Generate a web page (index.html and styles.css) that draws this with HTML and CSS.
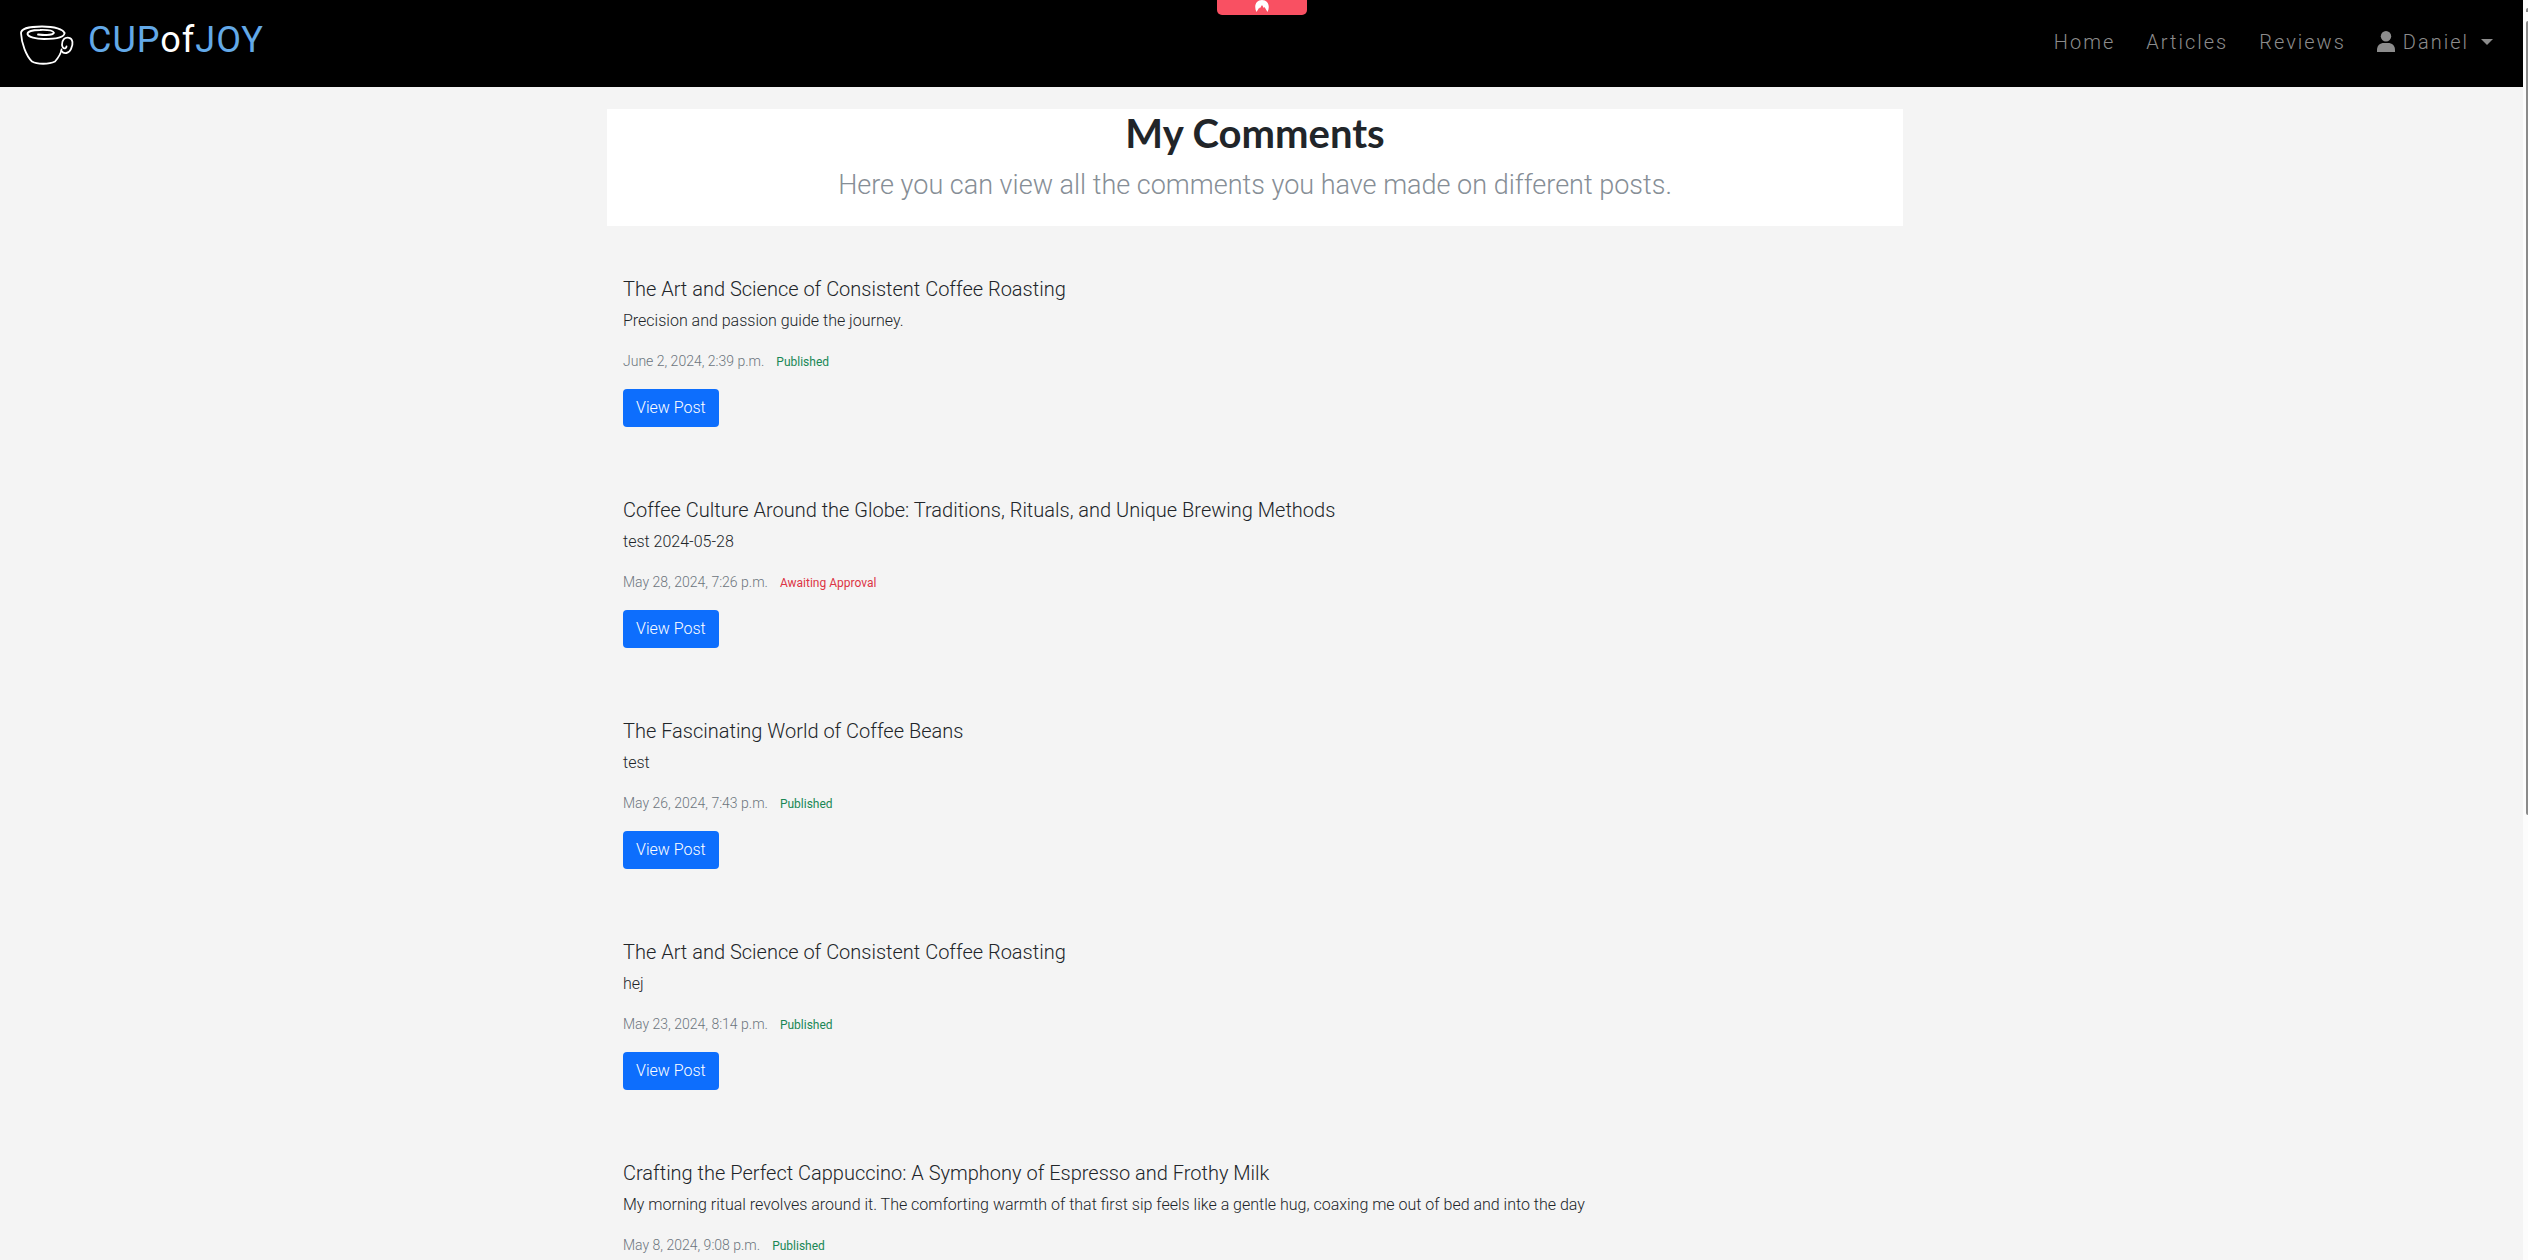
FILE: index.html
```html
<!DOCTYPE html>
<html lang="en">
<head>
<meta charset="utf-8">
<title>My Comments</title>
<link rel="stylesheet" href="styles.css">
</head>
<body>
<div class="page">
  <header class="navbar">
    <a class="brand" href="#">
      <svg class="brand-cup" width="54" height="42" viewBox="0 0 54 42" fill="none" stroke="#fff" stroke-width="1.8" stroke-linecap="round" stroke-linejoin="round" aria-hidden="true">
        <path d="M44.500 8C43 4.500 35 1.500 22 1.500C11 1.500 1 3.500 1 8C1.500 18 6 31 12 36.500C17 39.500 29 39.500 35 36.500C38 33 41 29 41.500 24.500"/>
        <path d="M18 9.500C27 10.500 33.500 9.500 34 7.800C33 5.500 26 4.800 20 5C12 5 7.500 6.500 7.500 9C8 12 16 14 24 14C35 14 44.500 12.500 44.500 8"/>
        <path d="M41.500 26C44 29.500 49 28.500 51 24C53.500 19 53 13.500 49 12.800C44.500 12 42 15 42 20C42.500 24 46 24.500 46.500 21.500"/>
      </svg>
      <span class="brand-name">CUP<span class="brand-of">of</span>JOY</span>
    </a>
    <nav class="menu">
      <a href="#">Home</a>
      <a href="#">Articles</a>
      <a href="#">Reviews</a>
      <button class="user" type="button">
        <svg width="18" height="21" viewBox="0 0 18 21" fill="currentColor" aria-hidden="true"><circle cx="9" cy="5.200" r="5.200"/><path d="M0 21v-2c0-4.500 3-7 7-7h4c4 0 7 2.500 7 7v2z"/></svg>
        <span>Daniel</span>
        <svg class="caret" width="12" height="6" viewBox="0 0 12 6" fill="currentColor" aria-hidden="true"><path d="M0 0h12L6 6z"/></svg>
      </button>
    </nav>
  </header>

  <main class="content">
    <section class="intro">
      <h1>My Comments</h1>
      <p>Here you can view all the comments you have made on different posts.</p>
    </section>
    <div class="comments">
      <article class="comment">
        <h2>The Art and Science of Consistent Coffee Roasting</h2>
        <p class="text">Precision and passion guide the journey.</p>
        <p class="meta"><time>June 2, 2024, 2:39 p.m.</time><span class="badge published">Published</span></p>
        <a class="btn" href="#">View Post</a>
      </article>
      <article class="comment">
        <h2>Coffee Culture Around the Globe: Traditions, Rituals, and Unique Brewing Methods</h2>
        <p class="text">test 2024-05-28</p>
        <p class="meta"><time>May 28, 2024, 7:26 p.m.</time><span class="badge awaiting">Awaiting Approval</span></p>
        <a class="btn" href="#">View Post</a>
      </article>
      <article class="comment">
        <h2>The Fascinating World of Coffee Beans</h2>
        <p class="text">test</p>
        <p class="meta"><time>May 26, 2024, 7:43 p.m.</time><span class="badge published">Published</span></p>
        <a class="btn" href="#">View Post</a>
      </article>
      <article class="comment">
        <h2>The Art and Science of Consistent Coffee Roasting</h2>
        <p class="text">hej</p>
        <p class="meta"><time>May 23, 2024, 8:14 p.m.</time><span class="badge published">Published</span></p>
        <a class="btn" href="#">View Post</a>
      </article>
      <article class="comment">
        <h2>Crafting the Perfect Cappuccino: A Symphony of Espresso and Frothy Milk</h2>
        <p class="text">My morning ritual revolves around it. The comforting warmth of that first sip feels like a gentle hug, coaxing me out of bed and into the day</p>
        <p class="meta"><time>May 8, 2024, 9:08 p.m.</time><span class="badge published">Published</span></p>
      </article>
    </div>
  </main>
</div>
<div class="tab" aria-hidden="true">
  <svg width="14" height="12" viewBox="0 0 14 12" fill="#fff"><path d="M1.500 12C-1.500 6 1 0 7 0s8.500 6 5.500 12L9.500 7 8.800 8 7 5 4.800 8.500 4.300 7.500z"/></svg>
</div>
<div class="rail" aria-hidden="true"><span class="rail-arrow"></span><span class="rail-thumb"></span></div>
</body>
</html>
```
FILE: styles.css
```css
* { box-sizing: border-box; }

body {
  margin: 0;
  background: #f4f4f4;
  color: #212529;
  font: 300 16px/24px Roboto, "Liberation Sans", sans-serif;
}

h1, h2, p { margin: 0; }
a { color: inherit; text-decoration: none; }

.page { margin-right: 5px; }

/* Top bar */
.navbar {
  display: flex;
  justify-content: space-between;
  align-items: center;
  height: 87px;
  padding: 0 30px 0 20px;
  background: #000;
}

.brand { display: flex; align-items: center; gap: 14px; }
.brand-cup { margin-top: 4px; }
.brand-name {
  padding-bottom: 8px;
  color: #63a9e8;
  font-size: 36px;
  font-weight: 400;
  line-height: 44px;
  letter-spacing: 1px;
}
.brand-of { color: #fff; }

.menu {
  display: flex;
  align-items: center;
  gap: 31px;
  padding-bottom: 4px;
  color: #8c8c8c;
  font-size: 20px;
  letter-spacing: 2px;
}
.user {
  display: flex;
  align-items: center;
  gap: 8px;
  padding: 0;
  border: 0;
  background: none;
  color: inherit;
  font: inherit;
  letter-spacing: inherit;
}
.caret { margin-left: 4px; }

/* Main column */
.content {
  margin-right: 13px;
  padding-top: 22px;
}
.intro,
.comments {
  max-width: 1296px;
  margin: 0 auto;
}

.intro {
  padding-bottom: 19px;
  background: #fff;
  text-align: center;
}
.intro h1 {
  font: 700 40px/48px Lato, sans-serif;
}
.intro p {
  padding-top: 6px;
  color: #868e96;
  font-size: 27px;
  line-height: 44px;
}

.comments {
  display: grid;
  gap: 71px;
  padding: 51px 16px 0;
}
.comment h2 {
  margin-bottom: 8px;
  font-size: 20px;
  font-weight: 300;
  line-height: 24px;
}
.meta {
  height: 24px;
  margin: 16px 0;
}
.comment:last-child .meta { margin-bottom: 0; }
.meta time {
  margin-right: 12px;
  color: #6c757d;
  font-size: 14px;
}
.badge { font-size: 12px; font-weight: 400; }
.published { color: #198754; }
.awaiting { color: #dc3545; }

.btn {
  display: inline-block;
  padding: 7px 13px;
  border-radius: 4px;
  background: #0d6efd;
  color: #fff;
  vertical-align: top;
}

/* Tab hanging from the window's top edge */
.tab {
  position: fixed;
  top: 0;
  left: 50%;
  display: flex;
  justify-content: center;
  width: 90px;
  height: 15px;
  margin-left: -47px;
  border-radius: 0 0 5px 5px;
  background: #f95062;
}

/* Scroll rail */
.rail {
  position: fixed;
  top: 0;
  right: 0;
  bottom: 0;
  width: 5px;
  background: #fcfcfc;
}
.rail-arrow {
  position: absolute;
  top: 8px;
  right: 0;
  width: 2px;
  height: 4px;
  border-radius: 2px 0 0 0;
  background: #8b8b8b;
}
.rail-thumb {
  position: absolute;
  top: 21px;
  right: 0;
  width: 2px;
  height: 63%;
  border-radius: 2px 0 0 2px;
  background: #8b8b8b;
}
```
